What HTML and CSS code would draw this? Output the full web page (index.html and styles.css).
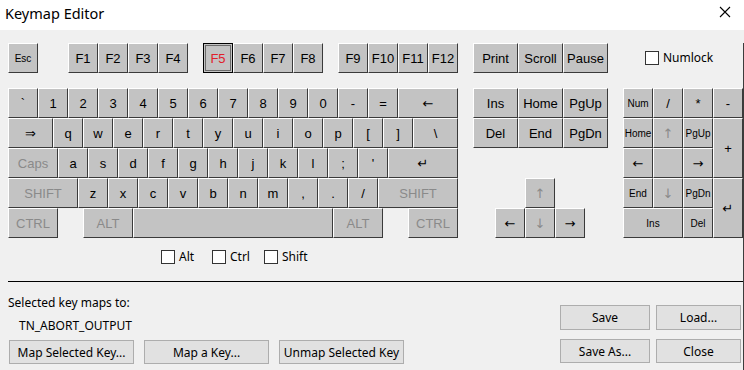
FILE: index.html
```html
<!DOCTYPE html>
<html>
<head>
<meta charset="utf-8">
<link rel="stylesheet" href="styles.css">
</head>
<body>
<div class="window">
  <div class="titlebar">
    <span class="title">Keymap Editor</span>
    <svg class="closex" width="12" height="12" viewBox="0 0 12 12"><path d="M1 1 L11 11 M11 1 L1 11" stroke="#000" stroke-width="1.1" fill="none"/></svg>
  </div>
  <div class="client">
    <div class="frow">
      <div class="k sm">Esc</div>
      <div class="grp ml30">
        <div class="k">F1</div><div class="k">F2</div><div class="k">F3</div><div class="k">F4</div>
      </div>
      <div class="grp ml15">
        <div class="k sel">F5</div><div class="k">F6</div><div class="k">F7</div><div class="k">F8</div>
      </div>
      <div class="grp ml15">
        <div class="k">F9</div><div class="k">F10</div><div class="k">F11</div><div class="k">F12</div>
      </div>
      <div class="grp ml15">
        <div class="k w45">Print</div><div class="k w45">Scroll</div><div class="k w45">Pause</div>
      </div>
      <label class="cb numlock"><span class="box"></span><span>Numlock</span></label>
    </div>

    <div class="main">
      <div class="alpha">
        <div class="row">
          <div class="k">`</div><div class="k">1</div><div class="k">2</div><div class="k">3</div><div class="k">4</div><div class="k">5</div><div class="k">6</div><div class="k">7</div><div class="k">8</div><div class="k">9</div><div class="k">0</div><div class="k">-</div><div class="k">=</div><div class="k w60 sym">&#8592;</div>
        </div>
        <div class="row">
          <div class="k w45 sym">&#8658;</div><div class="k">q</div><div class="k">w</div><div class="k">e</div><div class="k">r</div><div class="k">t</div><div class="k">y</div><div class="k">u</div><div class="k">i</div><div class="k">o</div><div class="k">p</div><div class="k">[</div><div class="k">]</div><div class="k w45">\</div>
        </div>
        <div class="row">
          <div class="k w50 dim">Caps</div><div class="k">a</div><div class="k">s</div><div class="k">d</div><div class="k">f</div><div class="k">g</div><div class="k">h</div><div class="k">j</div><div class="k">k</div><div class="k">l</div><div class="k">;</div><div class="k">'</div><div class="k w70 sym">&#8629;</div>
        </div>
        <div class="row">
          <div class="k w70 dim">SHIFT</div><div class="k">z</div><div class="k">x</div><div class="k">c</div><div class="k">v</div><div class="k">b</div><div class="k">n</div><div class="k">m</div><div class="k">,</div><div class="k">.</div><div class="k">/</div><div class="k w80 dim">SHIFT</div>
        </div>
        <div class="row">
          <div class="k w50 dim">CTRL</div><div class="k w50 dim ml25">ALT</div><div class="k w200"></div><div class="k w50 dim">ALT</div><div class="k w50 dim ml25">CTRL</div>
        </div>
      </div>

      <div class="nav">
        <div class="navgrid">
          <div class="k w45">Ins</div><div class="k w45">Home</div><div class="k w45">PgUp</div>
          <div class="k w45">Del</div><div class="k w45">End</div><div class="k w45">PgDn</div>
        </div>
        <div class="arrows">
          <div class="k sym dim up">&#8593;</div>
          <div class="k sym r2">&#8592;</div><div class="k sym dim r2">&#8595;</div><div class="k sym r2">&#8594;</div>
        </div>
      </div>

      <div class="numpad">
        <div class="k sm">Num</div><div class="k">/</div><div class="k">*</div><div class="k">-</div>
        <div class="k sm">Home</div><div class="k sym dim">&#8593;</div><div class="k sm">PgUp</div><div class="k tall">+</div>
        <div class="k sym">&#8592;</div><div class="k"></div><div class="k sym">&#8594;</div>
        <div class="k sm">End</div><div class="k sym dim">&#8595;</div><div class="k sm">PgDn</div><div class="k tall sym">&#8629;</div>
        <div class="k sm wide">Ins</div><div class="k sm">Del</div>
      </div>
    </div>

    <div class="mods">
      <label class="cb alt"><span class="box"></span><span>Alt</span></label>
      <label class="cb ctrl"><span class="box"></span><span>Ctrl</span></label>
      <label class="cb"><span class="box"></span><span>Shift</span></label>
    </div>

    <div class="rule"></div>

    <div class="bottom">
      <div class="info">
        <div class="lbl">Selected key maps to:</div>
        <div class="val">TN_ABORT_OUTPUT</div>
        <div class="btns">
          <button class="btn">Map Selected Key...</button>
          <button class="btn">Map a Key...</button>
          <button class="btn">Unmap Selected Key</button>
        </div>
      </div>
      <div class="actions">
        <button class="btn">Save</button>
        <button class="btn">Load...</button>
        <button class="btn">Save As...</button>
        <button class="btn">Close</button>
      </div>
    </div>
  </div>
</div>
</body>
</html>
```
FILE: styles.css
```css
* { box-sizing: border-box; }
html, body { margin: 0; padding: 0; }
body {
  width: 744px;
  height: 370px;
  overflow: hidden;
  background: #f0f0f0;
  font-family: "Noto Sans", "DejaVu Sans", sans-serif;
  font-size: 12px;
  color: #000;
}
.window { width: 744px; height: 370px; }
.titlebar {
  height: 30px;
  background: #fff;
  display: flex;
  align-items: center;
  justify-content: space-between;
  padding-left: 5px;
}
.title { font-size: 14.5px; line-height: 20px; margin-top: -5px; }
.closex { margin-right: 13px; margin-top: -6px; }
.client {
  height: 340px;
  border-right: 1px solid #3c3c3c;
  background: #f0f0f0;
}
.frow {
  display: flex;
  align-items: center;
  margin-top: 13px;
  padding-left: 8px;
}
.grp { display: flex; }
.ml30 { margin-left: 30px; }
.ml15 { margin-left: 15px; }
.ml25 { margin-left: 25px; }

.k {
  width: 30px;
  height: 30px;
  flex: none;
  background: #c3c3c3;
  border-top: 1px solid #fff;
  border-left: 1px solid #fff;
  border-right: 1px solid #3a3a3a;
  border-bottom: 1px solid #3a3a3a;
  display: flex;
  align-items: center;
  justify-content: center;
  font-family: "Liberation Sans", "DejaVu Sans", sans-serif;
  font-size: 13px;
  color: #000;
  white-space: nowrap;
  overflow: hidden;
}
.w45 { width: 45px; }
.w50 { width: 50px; }
.w60 { width: 60px; }
.w70 { width: 70px; }
.w80 { width: 80px; }
.w200 { width: 200px; }
.dim { color: #8a8a8a; }
.sm { font-family: "Liberation Sans", "DejaVu Sans", sans-serif; font-size: 10px; }
.sym { font-family: "DejaVu Sans", sans-serif; font-size: 13px; }
.sel {
  border: 1px solid #000;
  color: #e0202a;
  box-shadow: inset 0 0 0 1px #c3c3c3, inset 0 0 0 2px #6a6a6a;
}

.cb {
  display: flex;
  align-items: center;
  gap: 4px;
  font-size: 12px;
  line-height: 14px;
}
.box {
  width: 14px;
  height: 14px;
  flex: none;
  border: 1px solid #333;
  background: #fff;
}
.numlock { margin-left: 37px; margin-top: -1px; }

.main {
  display: flex;
  gap: 15px;
  margin-top: 15px;
  padding-left: 8px;
}
.alpha { display: flex; flex-direction: column; width: 450px; }
.row { display: flex; }
.nav { width: 135px; display: flex; flex-direction: column; }
.navgrid {
  display: grid;
  grid-template-columns: repeat(3, 45px);
  grid-auto-rows: 30px;
}
.arrows {
  display: grid;
  grid-template-columns: repeat(3, 30px);
  grid-auto-rows: 30px;
  margin-top: 30px;
  margin-left: 22px;
}
.arrows .up { grid-column: 2; grid-row: 1; }
.arrows .r2 { grid-row: 2; }
.numpad {
  display: grid;
  grid-template-columns: repeat(4, 30px);
  grid-template-rows: repeat(5, 30px);
}
.numpad .k { width: auto; height: auto; }
.tall { grid-row: span 2; }
.wide { grid-column: span 2; }

.mods {
  display: flex;
  align-items: center;
  margin-top: 12px;
  padding-left: 161px;
  height: 14px;
}
.mods .alt { width: 51px; }
.mods .ctrl { width: 52px; }

.rule {
  margin: 17px 0 0 8px;
  border-top: 1px solid #000;
}

.bottom { display: flex; justify-content: space-between; }
.info { padding-left: 8px; padding-top: 13px; }
.lbl { line-height: 16px; }
.val { line-height: 16px; margin-top: 7px; padding-left: 11px; }
.btns { display: flex; gap: 10px; margin-top: 6px; margin-left: 1px; }
.btn {
  font-family: "Noto Sans", "DejaVu Sans", sans-serif;
  font-size: 12px;
  color: #000;
  background: #e1e1e1;
  border: 1px solid #adadad;
  padding: 0;
  margin: 0;
}
.btns .btn { width: 125px; height: 24px; }
.actions {
  display: grid;
  grid-template-columns: 90px 85px;
  grid-template-rows: 25px 24px;
  column-gap: 6px;
  row-gap: 9px;
  margin-top: 23px;
  margin-right: 2px;
}
```
